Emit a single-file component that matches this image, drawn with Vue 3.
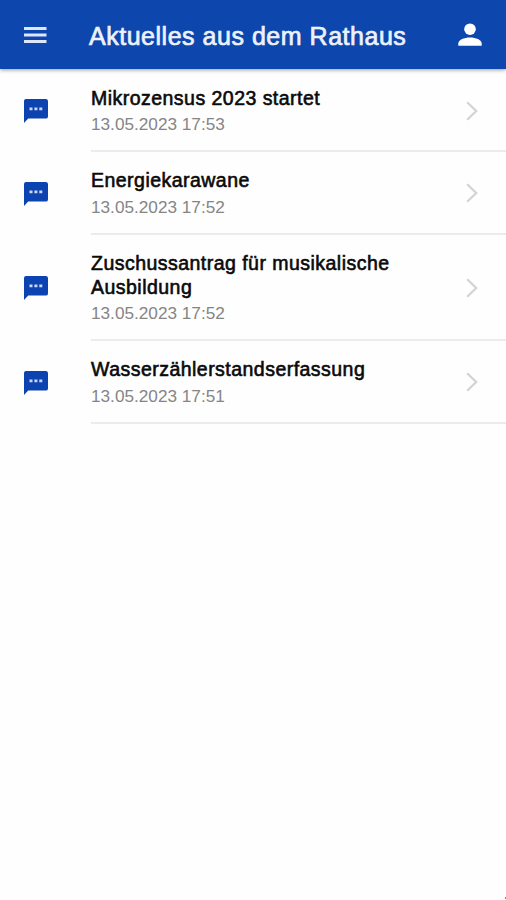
<script setup>
const items = [
  { title: 'Mikrozensus 2023 startet', date: '13.05.2023 17:53' },
  { title: 'Energiekarawane', date: '13.05.2023 17:52' },
  { title: 'Zuschussantrag für musikalische Ausbildung', date: '13.05.2023 17:52' },
  { title: 'Wasserzählerstandserfassung', date: '13.05.2023 17:51' },
]
</script>

<template>
  <div class="screen">
    <header class="bar">
      <svg class="menu" viewBox="0 0 24 18" aria-hidden="true">
        <path d="M0 1h22.5v3H0zM0 7.5h22.5v3H0zM0 14h22.5v3H0z" />
      </svg>
      <h1>Aktuelles aus dem Rathaus</h1>
      <svg class="person" viewBox="0 0 24 24" aria-hidden="true">
        <circle cx="12" cy="6.2" r="5.8" />
        <path d="M.3 22.7v-2.2C.3 16.8 6.3 14.5 12 14.5s11.7 2.3 11.7 6v2.2z" />
      </svg>
    </header>
    <ul class="list">
      <li v-for="item in items" :key="item.title" class="row">
        <svg class="bubble" viewBox="0 0 24 24" aria-hidden="true">
          <path class="shape" d="M2 0h19.8Q24 0 24 2.2v15.2Q24 19.6 21.8 19.6H4.2L0 24V2Q0 0 2 0z" />
          <path class="dots" d="M5.5 8.4h3v2.8h-3zM10.4 8.4h3v2.8h-3zM15.3 8.4h3v2.8h-3z" />
        </svg>
        <div class="body">
          <div class="text">
            <h2>{{ item.title }}</h2>
            <p>{{ item.date }}</p>
          </div>
          <svg class="chevron" viewBox="0 0 12 20" aria-hidden="true">
            <path d="M1.2 1.2 10.2 10 1.2 18.8" />
          </svg>
        </div>
      </li>
    </ul>
    <span class="mark"></span>
  </div>
</template>

<style>
body {
  margin: 0;
  background: #fefefe;
}
</style>

<style scoped>
.screen {
  position: relative;
  min-height: 900px;
  background: #fefefe;
  font-family: 'Liberation Sans', Arial, sans-serif;
}
.bar {
  display: flex;
  align-items: center;
  box-sizing: border-box;
  height: 69px;
  padding: 1px 24px 0;
  background: #0d47ad;
  color: #eef1fb;
  box-shadow: 0 1px 4px rgba(0, 0, 0, 0.4);
}
.menu {
  width: 24px;
  height: 18px;
  fill: #dfe6fa;
}
h1 {
  flex: 1;
  margin: 0 0 0 41px;
  padding-top: 2px;
  font-size: 25px;
  font-weight: 400;
  line-height: 30px;
  letter-spacing: 0.52px;
  white-space: nowrap;
  -webkit-text-stroke: 0.7px currentColor;
}
.person {
  width: 24px;
  height: 24px;
  fill: #fff;
}
.list {
  margin: 0;
  padding: 0.6px 0 0;
  list-style: none;
}
.row {
  display: flex;
  align-items: center;
  padding-left: 24px;
}
.bubble {
  flex: none;
  width: 24px;
  height: 24px;
}
.shape {
  fill: #0d43b0;
}
.dots {
  fill: #cbd8f5;
}
.body {
  display: flex;
  flex: 1;
  align-items: center;
  margin-left: 43px;
  padding: 17.2px 28px 16px 0;
  border-bottom: 2px solid #ececec;
}
.text {
  flex: 1;
}
h2 {
  max-width: 320px;
  margin: 0;
  color: #0a0a0a;
  font-size: 19.5px;
  font-weight: 400;
  line-height: 23.5px;
  letter-spacing: 0.47px;
  -webkit-text-stroke: 0.6px currentColor;
}
p {
  margin: 4px 0 0;
  color: #858585;
  font-size: 17.2px;
  line-height: 20px;
}
.chevron {
  width: 12px;
  height: 20px;
  fill: none;
  stroke: #d4d4d4;
  stroke-width: 2.3;
}
.mark {
  position: absolute;
  right: 0;
  bottom: 1px;
  width: 1px;
  height: 2px;
  background: #8c8794;
}
</style>
